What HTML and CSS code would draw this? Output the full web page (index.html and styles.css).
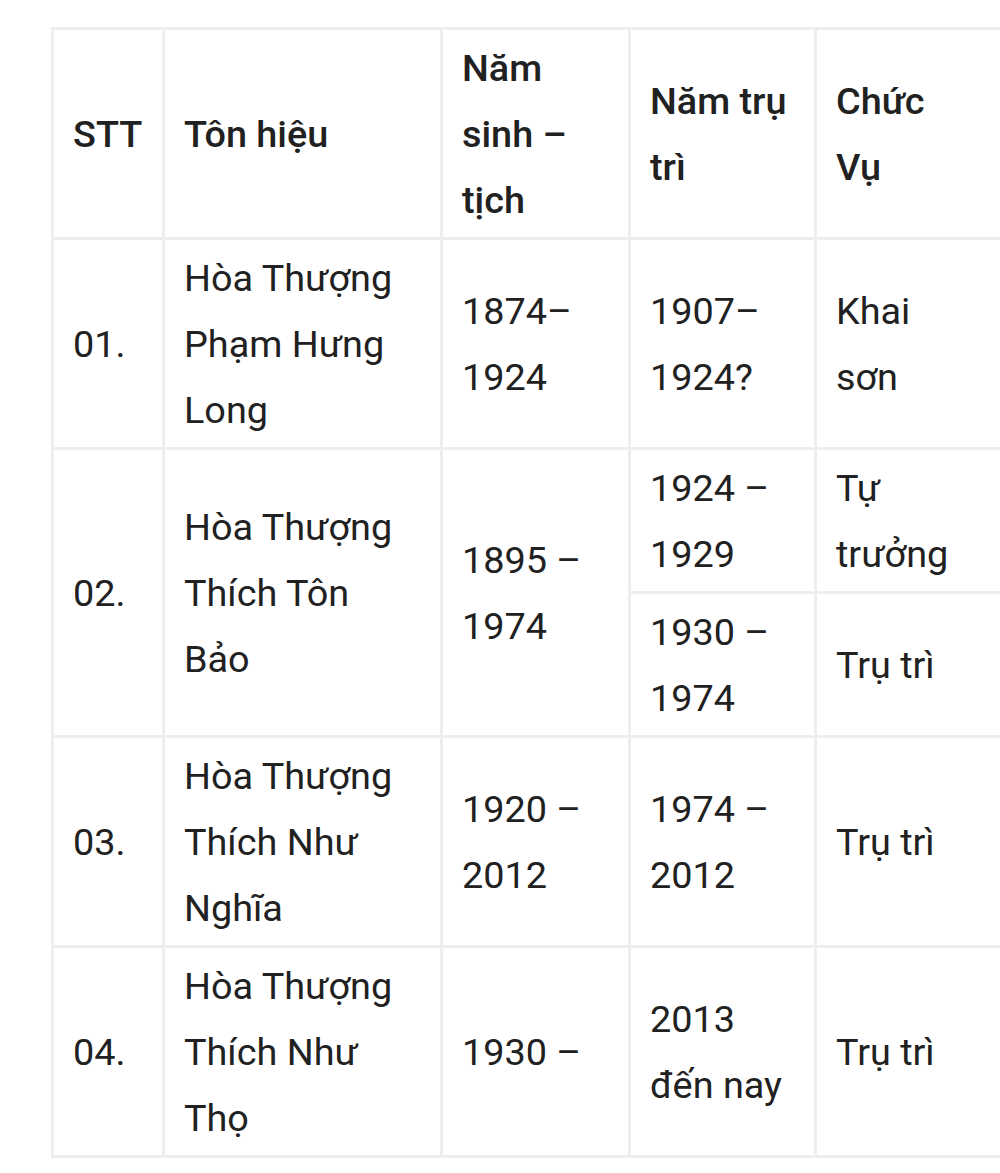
FILE: index.html
```html
<!DOCTYPE html>
<html lang="vi">
<head>
<meta charset="utf-8">
<title>Bảng trụ trì</title>
<link rel="stylesheet" href="styles.css">
</head>
<body>
<div class="wrap">
<table class="tbl">
  <colgroup>
    <col class="c1"><col class="c2"><col class="c3"><col class="c4"><col class="c5">
  </colgroup>
  <thead>
    <tr>
      <th>STT</th>
      <th>Tôn hiệu</th>
      <th>Năm sinh – tịch</th>
      <th>Năm trụ trì</th>
      <th class="last">Chức Vụ</th>
    </tr>
  </thead>
  <tbody>
    <tr>
      <td>01.</td>
      <td>Hòa Thượng Phạm Hưng Long</td>
      <td>1874–1924</td>
      <td>1907–1924?</td>
      <td class="last">Khai sơn</td>
    </tr>
    <tr>
      <td rowspan="2">02.</td>
      <td rowspan="2">Hòa Thượng Thích Tôn Bảo</td>
      <td rowspan="2">1895 – 1974</td>
      <td>1924 – 1929</td>
      <td class="last">Tự trưởng</td>
    </tr>
    <tr>
      <td>1930 – 1974</td>
      <td class="last">Trụ trì</td>
    </tr>
    <tr>
      <td>03.</td>
      <td>Hòa Thượng Thích Như Nghĩa</td>
      <td>1920 – 2012</td>
      <td>1974 – 2012</td>
      <td class="last">Trụ trì</td>
    </tr>
    <tr>
      <td>04.</td>
      <td>Hòa Thượng Thích Như Thọ</td>
      <td>1930 –</td>
      <td>2013 đến nay</td>
      <td class="last">Trụ trì</td>
    </tr>
  </tbody>
</table>
</div>
</body>
</html>
```

FILE: styles.css
```css
html, body {
  margin: 0;
  padding: 0;
  background: #ffffff;
  overflow: hidden;
}

body {
  font-family: Roboto, "Liberation Sans", sans-serif;
  color: #212121;
}

.wrap {
  box-sizing: border-box;
  width: 1000px;
  padding: 27px 0 0 51px;
  overflow: hidden;
}

.tbl {
  border-collapse: separate;
  border-spacing: 0;
  table-layout: fixed;
  width: 952px;
  border-top: 3px solid #eeeeee;
  border-left: 3px solid #eeeeee;
  font-size: 37.8px;
  line-height: 66px;
}

.c1 { width: 111px; }
.c2 { width: 278px; }
.c3 { width: 188px; }
.c4 { width: 186px; }
.c5 { width: 186px; }

.tbl th,
.tbl td {
  box-sizing: border-box;
  border-right: 3px solid #eeeeee;
  border-bottom: 3px solid #eeeeee;
  padding: 4.5px 19px;
  text-align: left;
  vertical-align: middle;
}

.tbl th {
  font-weight: 500;
}

.tbl .last {
  padding-right: 45px;
}
```
